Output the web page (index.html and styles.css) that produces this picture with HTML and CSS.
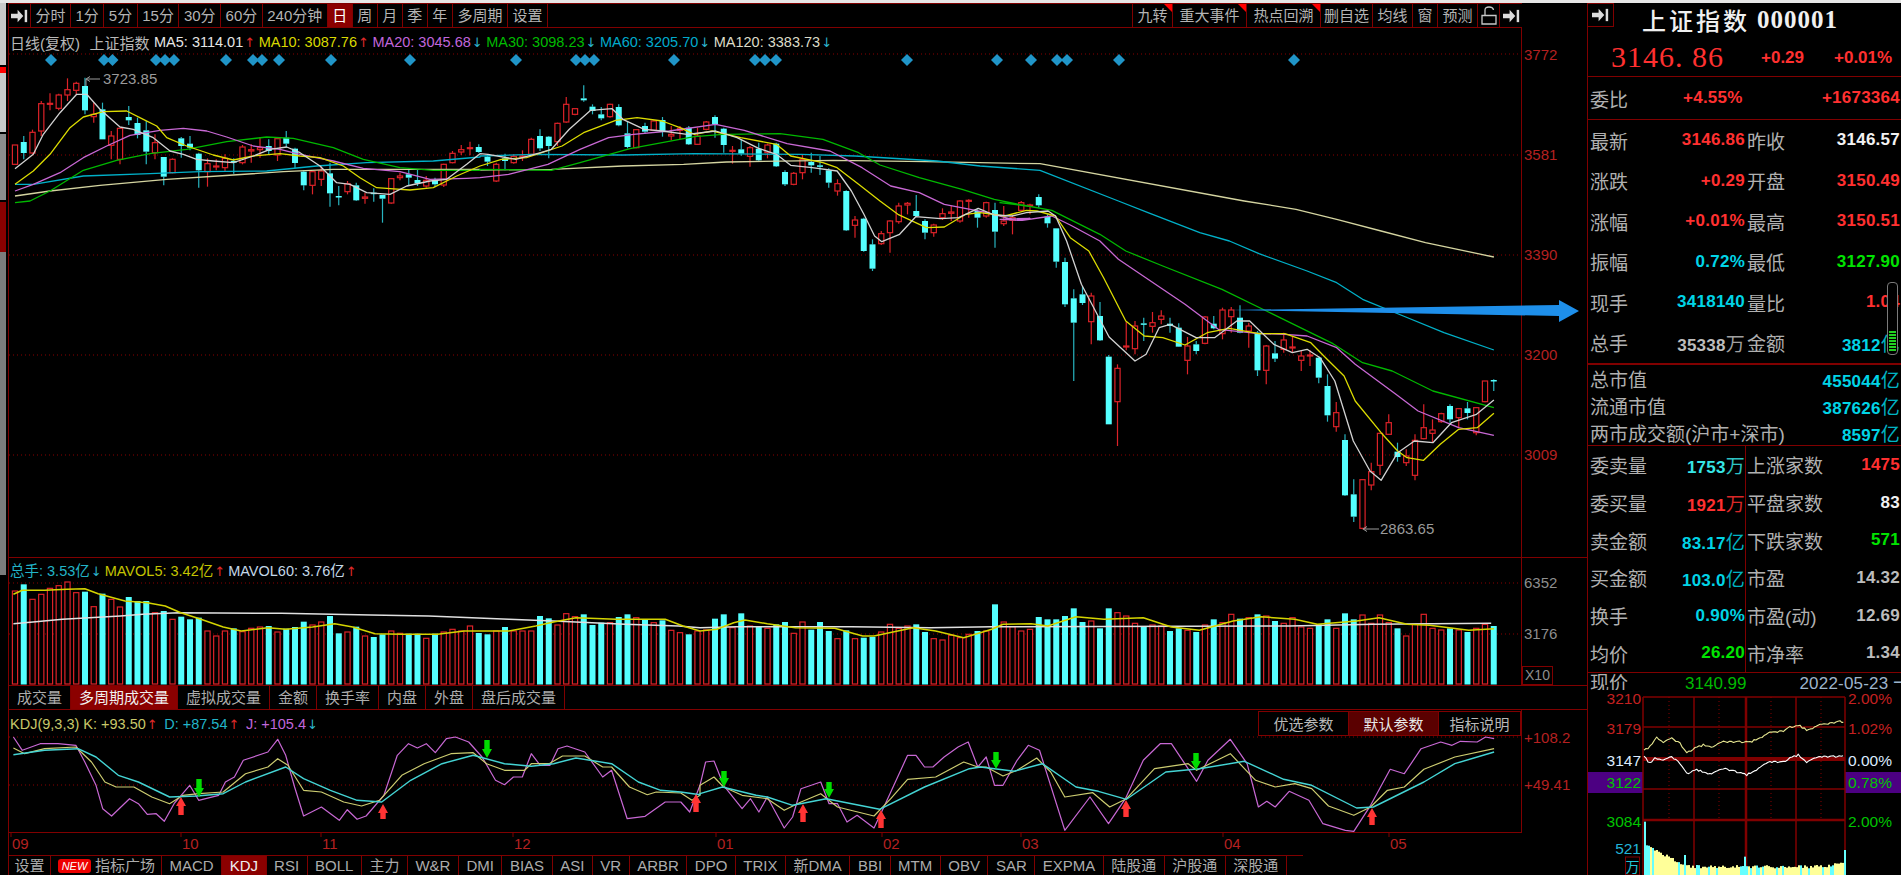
FILE: index.html
```html
<!DOCTYPE html>
<html lang="zh-CN">
<head>
<meta charset="utf-8">
<title>上证指数 000001</title>
<link rel="stylesheet" href="styles.css">
</head>
<body>
<div class="app">
  <div class="topstrip"></div>
  <div class="work">
    <div class="rail">
      <div class="rail-a"></div>
      <div class="rail-b"></div>
      <div class="rail-c"></div>
      <div class="rail-d"></div>
      <div class="rail-e"></div>
    </div>
    <main class="main">
      <div class="toolbar">
        <div class="tools">
          <button class="tool tool-icon"><svg class="arrow-ico" viewBox="0 0 18 14"><path d="M0 4.500H7V0.500L13 7L7 13.500V9.500H0Z"/><rect x="14.500" y="0.500" width="2.600" height="13"/></svg></button>
          <button class="tool">分时</button><button class="tool">1分</button><button class="tool">5分</button><button class="tool">15分</button><button class="tool">30分</button><button class="tool">60分</button><button class="tool">240分钟</button><button class="tool on">日</button><button class="tool">周</button><button class="tool">月</button><button class="tool">季</button><button class="tool">年</button><button class="tool">多周期</button><button class="tool">设置</button>
        </div>
        <div class="tools tools-right">
          <button class="tool flag">九转</button><button class="tool flag wide">重大事件</button><button class="tool flag wide">热点回溯</button><button class="tool slim">删自选</button><button class="tool">均线</button><button class="tool">窗</button><button class="tool">预测</button>
          <button class="tool tool-icon"><svg class="lock-ico" viewBox="0 0 16 19"><path d="M1 9.500H15V18H1Z M4 9.500V4Q4 1 8 1Q12 1 12.500 4"/></svg></button>
          <button class="tool tool-icon"><svg class="arrow-ico" viewBox="0 0 18 14"><path d="M0 4.500H7V0.500L13 7L7 13.500V9.500H0Z"/><rect x="14.500" y="0.500" width="2.600" height="13"/></svg></button>
        </div>
      </div>

      <section class="pane pane-price">
        <div class="plot">
          <div class="legend legend-price">
            <span class="c-dim">日线(复权)</span>
            <span class="c-dim gap-name">上证指数</span>
            <span class="c-ma5 gap-a">MA5: 3114.01<b class="up">↑</b></span>
            <span class="c-ma10">MA10: 3087.76<b class="up">↑</b></span>
            <span class="c-ma20">MA20: 3045.68<b class="down">↓</b></span>
            <span class="c-ma30">MA30: 3098.23<b class="down">↓</b></span>
            <span class="c-ma60">MA60: 3205.70<b class="down">↓</b></span>
            <span class="c-ma120">MA120: 3383.73<b class="down">↓</b></span>
          </div>
          <svg id="price" class="chart chart-price" viewBox="9 53 1512 503">
            <g class="plots"></g>
            <path class="pin" d="M100 78H87M90 75.500L86 78L90 80.500M86 78V85"/>
            <text class="extreme" x="103" y="83">3723.85</text>
            <path class="pin" d="M1379 528H1364M1367 525.500L1363 528L1367 530.500"/>
            <text class="extreme" x="1380" y="533">2863.65</text>
          </svg>
        </div>
        <div class="axis axis-price">
          <span class="tick">3772</span><span class="tick">3581</span><span class="tick">3390</span><span class="tick">3200</span><span class="tick">3009</span>
        </div>
        <svg class="blue-arrow" viewBox="1230 300 350 26"><path d="M1230 312L1559 307V302L1579 313L1559 324V318Z"/></svg>
      </section>

      <section class="pane pane-vol">
        <div class="plot">
          <div class="legend legend-vol">
            <span class="c-vol">总手: 3.53亿<b class="down">↓</b></span>
            <span class="c-mv5">MAVOL5: 3.42亿<b class="up">↑</b></span>
            <span class="c-mv60">MAVOL60: 3.76亿<b class="up">↑</b></span>
          </div>
          <svg id="vol" class="chart chart-vol" viewBox="9 579 1512 105"><g class="plots"></g></svg>
        </div>
        <div class="axis axis-vol">
          <span class="tick tick-grey">6352</span><span class="tick tick-grey tick-mid">3176</span>
          <span class="x10">X10</span>
        </div>
      </section>

      <nav class="tabs tabs-mid">
        <button class="tab">成交量</button><button class="tab on">多周期成交量</button><button class="tab">虚拟成交量</button><button class="tab">金额</button><button class="tab">换手率</button><button class="tab">内盘</button><button class="tab">外盘</button><button class="tab">盘后成交量</button>
      </nav>

      <section class="pane pane-kdj">
        <div class="plot">
          <div class="legend legend-kdj">
            <span class="c-k">KDJ(9,3,3) K: +93.50<b class="up">↑</b></span>
            <span class="c-d">D: +87.54<b class="up">↑</b></span>
            <span class="c-j">J: +105.4<b class="down">↓</b></span>
          </div>
          <svg id="kdj" class="chart chart-kdj" viewBox="9 732 1512 98"><g class="plots"></g></svg>
          <div class="params">
            <button class="param">优选参数</button><button class="param on">默认参数</button><button class="param">指标说明</button>
          </div>
        </div>
        <div class="axis axis-kdj">
          <span class="tick tick-wide">+108.2</span><span class="tick tick-wide">+49.41</span>
        </div>
      </section>

      <svg id="months" class="months" viewBox="9 831 1512 22">
        <g class="plots"></g>
        <text x="12" y="847">09</text><text x="182" y="847">10</text><text x="322" y="847">11</text><text x="514" y="847">12</text><text x="717" y="847">01</text><text x="883" y="847">02</text><text x="1022" y="847">03</text><text x="1224" y="847">04</text><text x="1390" y="847">05</text>
      </svg>

      <nav class="tabs tabs-bottom">
        <button class="tab tab-set">设置</button>
        <button class="tab tab-new"><span class="new">NEW</span>指标广场</button>
        <button class="tab">MACD</button><button class="tab on">KDJ</button><button class="tab">RSI</button><button class="tab">BOLL</button><button class="tab">主力</button><button class="tab">W&amp;R</button><button class="tab">DMI</button><button class="tab">BIAS</button><button class="tab">ASI</button><button class="tab">VR</button><button class="tab">ARBR</button><button class="tab">DPO</button><button class="tab">TRIX</button><button class="tab">新DMA</button><button class="tab">BBI</button><button class="tab">MTM</button><button class="tab">OBV</button><button class="tab">SAR</button><button class="tab">EXPMA</button><button class="tab">陆股通</button><button class="tab">沪股通</button><button class="tab">深股通</button>
      </nav>
    </main>

    <aside class="side">
      <div class="side-head">
        <button class="side-btn"><svg class="arrow-ico" viewBox="0 0 18 14"><path d="M0 4.500H7V0.500L13 7L7 13.500V9.500H0Z"/><rect x="14.500" y="0.500" width="2.600" height="13"/></svg></button>
        <h1 class="title"><span class="name">上证指数</span><span class="code">000001</span></h1>
      </div>
      <div class="side-price">
        <span class="last">3146. 86</span><span class="chg">+0.29</span><span class="chg chg-pct">+0.01%</span>
      </div>
      <div class="webi">
        <span class="k">委比</span><span class="v red webi-a">+4.55%</span><span class="v red">+1673364</span>
      </div>

      <div class="quote">
        <div class="kv"><span class="k">最新</span><span class="v red">3146.86</span></div>
        <div class="kv"><span class="k">昨收</span><span class="v white">3146.57</span></div>
        <div class="kv"><span class="k">涨跌</span><span class="v red">+0.29</span></div>
        <div class="kv"><span class="k">开盘</span><span class="v red">3150.49</span></div>
        <div class="kv"><span class="k">涨幅</span><span class="v red">+0.01%</span></div>
        <div class="kv"><span class="k">最高</span><span class="v red">3150.51</span></div>
        <div class="kv"><span class="k">振幅</span><span class="v cyan">0.72%</span></div>
        <div class="kv"><span class="k">最低</span><span class="v green">3127.90</span></div>
        <div class="kv"><span class="k">现手</span><span class="v cyan">3418140</span></div>
        <div class="kv"><span class="k">量比</span><span class="v red">1.04</span></div>
        <div class="kv"><span class="k">总手</span><span class="v grey">35338<i>万</i></span></div>
        <div class="kv"><span class="k">金额</span><span class="v cyan">3812<i>亿</i></span></div>
      </div>
      <div class="gauge"></div>

      <div class="caps">
        <div class="kv"><span class="k">总市值</span><span class="v cyan">455044<i>亿</i></span></div>
        <div class="kv"><span class="k">流通市值</span><span class="v cyan">387626<i>亿</i></span></div>
        <div class="kv"><span class="k">两市成交额(沪市+深市)</span><span class="v cyan">8597<i>亿</i></span></div>
      </div>

      <div class="breadth">
        <div class="kv"><span class="k">委卖量</span><span class="v aqua">1753<i>万</i></span></div>
        <div class="kv"><span class="k">上涨家数</span><span class="v red">1475</span></div>
        <div class="kv"><span class="k">委买量</span><span class="v red">1921<i>万</i></span></div>
        <div class="kv"><span class="k">平盘家数</span><span class="v white">83</span></div>
        <div class="kv"><span class="k">卖金额</span><span class="v cyan">83.17<i>亿</i></span></div>
        <div class="kv"><span class="k">下跌家数</span><span class="v green">571</span></div>
        <div class="kv"><span class="k">买金额</span><span class="v cyan">103.0<i>亿</i></span></div>
        <div class="kv"><span class="k">市盈</span><span class="v grey">14.32</span></div>
        <div class="kv"><span class="k">换手</span><span class="v cyan">0.90%</span></div>
        <div class="kv"><span class="k">市盈(动)</span><span class="v grey">12.69</span></div>
        <div class="kv"><span class="k">均价</span><span class="v green">26.20</span></div>
        <div class="kv"><span class="k">市净率</span><span class="v grey">1.34</span></div>
      </div>

      <div class="now">
        <span class="k">现价</span><span class="now-price">3140.99</span><span class="now-date">2022-05-23 一</span>
      </div>
      <svg id="mini" class="mini" viewBox="1588 690 313 185">
        <rect class="band" x="1588" y="772" width="55" height="21"/><rect class="band" x="1845" y="772" width="56" height="21"/>
        <g class="plots"></g>
        <g class="mini-left">
          <text class="m-red" x="1641" y="704">3210</text><text class="m-red" x="1641" y="734">3179</text><text class="m-white" x="1641" y="766">3147</text><text class="m-green" x="1641" y="788">3122</text><text class="m-green" x="1641" y="827">3084</text><text class="m-blue" x="1641" y="854">521</text>
        </g>
        <g class="mini-right">
          <text class="m-red" x="1848" y="704">2.00%</text><text class="m-red" x="1848" y="734">1.02%</text><text class="m-white" x="1848" y="766">0.00%</text><text class="m-green" x="1848" y="788">0.78%</text><text class="m-green" x="1848" y="827">2.00%</text>
        </g>
        <rect class="wan-box" x="1625.500" y="857" width="14" height="18"/>
        <text class="wan" x="1632.500" y="872">万</text>
      </svg>
    </aside>
  </div>
</div>
<script src="charts.js"></script>
</body>
</html>
```
FILE: styles.css
```css
* { box-sizing: border-box; }
html, body { margin: 0; height: 100%; background: #000; overflow: hidden; }
body { font-family: "Liberation Sans", "Noto Sans CJK SC", sans-serif; color: #b4b4b4; }
button { font: inherit; color: inherit; background: none; border: 0; margin: 0; padding: 0; }

.app { width: 1901px; height: 875px; display: flex; flex-direction: column; }
.topstrip { height: 3px; background: #e6e6e6; flex: none; }
.work { flex: 1; display: flex; min-height: 0; }

/* left rail */
.rail { width: 8px; flex: none; display: flex; flex-direction: column; padding-right: 2px; }
.rail-a { height: 62px; background: #c9c9c9; margin-bottom: 2px; }
.rail-b { height: 65px; background: linear-gradient(#f00 0 6px, #c8c8c8 6px); margin-bottom: 2px; }
.rail-c { height: 66px; background: #8d8d8d; margin-bottom: 2px; }
.rail-d { height: 50px; background: #8b0000; }
.rail-e { height: 323px; background: #7c7c7c; }

.main { width: 1579px; flex: none; display: flex; flex-direction: column; border-left: 1px solid #800000; position: relative; }

/* toolbar */
.toolbar { width: 1513px; height: 25px; flex: none; display: flex; justify-content: space-between; border-top: 1px solid #800000; border-bottom: 1px solid #800000; font-size: 15px; }
.tools { display: flex; }
.tool { padding: 0 4.500px; height: 23px; line-height: 23px; border-right: 1px solid #800000; white-space: nowrap; position: relative; }
.tools-right { border-left: 1px solid #800000; }
.tools-right .tool:last-child { border-right: 0; }
.tool.wide { padding: 0 6.500px; }
.tool.slim { padding: 0 3px; }
.tool.on { background: #8b0000; color: #fff; }
.tool.flag::after { content: ""; position: absolute; top: 0; right: 0; border-style: solid; border-width: 0 8px 8px 0; border-color: transparent #f00 transparent transparent; }
.tool-icon { width: 22px; padding: 0; display: flex; align-items: center; justify-content: center; }
.arrow-ico { width: 17px; height: 14px; fill: #dcdcdc; }
.lock-ico { width: 16px; height: 19px; fill: none; stroke: #c8c8c8; stroke-width: 1.300; }

/* panes */
.pane { display: flex; position: relative; flex: none; }
.pane-price { height: 530px; border-bottom: 1px solid #800000; }
.pane-vol { height: 128px; border-bottom: 1px solid #800000; }
.pane-kdj { height: 123px; }
.plot { width: 1512px; flex: none; display: flex; flex-direction: column; position: relative; }
.pane-kdj .plot { border-bottom: 1px solid #800000; }
.axis { flex: 1; border-left: 1px solid #800000; display: flex; flex-direction: column; padding-left: 2px; font-size: 15px; color: #b52020; }
.tick { height: 20px; line-height: 20px; flex: none; }
.axis-price { padding-top: 17px; gap: 80px; }
.axis-vol { padding-top: 15px; }
.tick-grey { color: #8e8e8e; }
.tick-mid { margin-top: 31px; }
.axis-kdj { padding-top: 18px; gap: 27px; }
.x10 { margin: auto 0 0 -2px; width: 31px; height: 19px; line-height: 17px; border: 1px solid #800000; color: #8e8e8e; font-size: 14px; text-align: center; }

.chart { display: block; flex: none; width: 1512px; overflow: visible; }
.chart-price { height: 503px; }
.chart-vol { height: 105px; }
.chart-kdj { height: 98px; }

/* legends */
.legend { display: flex; align-items: center; white-space: nowrap; font-size: 14.500px; padding-left: 1px; flex: none; }
.legend b { font-weight: 400; margin-left: 1px; font-family: "DejaVu Sans", sans-serif; font-size: 13px; }
.legend .up { color: #e02a2a; }
.legend .down { color: #2cb4cc; }
.legend-price { height: 26px; gap: 3.500px; padding-top: 2px; }
.gap-name { margin-left: 6px; }
.gap-a { margin-left: 1px; }
.legend-vol { height: 22px; gap: 3px; padding-top: 1px; }
.legend-kdj { height: 24px; gap: 6.500px; padding-top: 4px; }
.c-dim { color: #b8b8b8; font-size: 15px; }
.c-ma5 { color: #e6e6e6; }
.c-ma10 { color: #d9d900; }
.c-ma20 { color: #c066dc; }
.c-ma30 { color: #00bb00; }
.c-ma60 { color: #00aacc; }
.c-ma120 { color: #dcdcc8; }
.c-vol { color: #22b4c8; }
.c-mv5 { color: #c4c400; }
.c-mv60 { color: #c4d8e8; }
.c-k { color: #c8c86a; }
.c-d { color: #22b4c8; }
.c-j { color: #c066dc; }

.pin { fill: none; stroke: #9c9c9c; stroke-width: 1; }
.extreme { fill: #9a9a9a; font-size: 15px; }
.blue-arrow { position: absolute; left: 1221px; top: 270px; width: 350px; height: 26px; fill: #1e8fea; z-index: 2; }

/* tabs */
.tabs { display: flex; flex: none; font-size: 15px; }
.tabs-mid { height: 24px; border-bottom: 1px solid #800000; }
.tabs-bottom { flex: 1; min-height: 0; border-top: 1px solid #800000; width: 1294px; overflow: hidden; }
.tab { padding: 0 8px; border-right: 1px solid #800000; white-space: nowrap; color: #acacac; height: 100%; line-height: 23px; }
.tab.on { background: #8b0000; color: #f0f0f0; }
.tab-set { padding: 0 5.500px; margin-right: 2px; }
.tab-new { padding: 0 6px 0 5px; display: flex; align-items: center; gap: 4px; }
.new { width: 33px; height: 14px; line-height: 14px; border-radius: 3px; background: #ee0000; color: #fff; font-size: 11px; font-style: italic; text-align: center; }
.tabs-bottom .tab { padding: 0 7.500px; line-height: 19px; }
.tabs-bottom .tab-set { padding: 0 5.500px; }
.tabs-bottom .tab-new { padding: 0 6px 0 5px; }

.params { position: absolute; top: 1px; right: 0; height: 25px; display: flex; border: 1px solid #800000; background: #000; font-size: 15px; }
.param { width: 90px; border-right: 1px solid #800000; color: #b8b8b8; }
.param:last-child { width: 81px; border-right: 0; }
.param.on { background: #5a0000; color: #e8e8e8; }

.months { display: block; flex: none; width: 1512px; height: 22px; }
.months text { fill: #b52020; font-size: 15px; }

/* right panel */
.side { width: 314px; flex: none; display: flex; flex-direction: column; border-left: 1px solid #800000; position: relative; overflow: hidden; }
.side-head { height: 34px; display: flex; align-items: flex-start; flex: none; }
.side-btn { width: 26px; height: 24px; border: 1px solid #800000; border-left: 0; display: flex; align-items: center; justify-content: center; flex: none; }
.title { margin: 2px 0 0 28px; color: #f0f0f0; font: 500 24px/30px "Noto Sans CJK SC", sans-serif; white-space: nowrap; display: flex; gap: 7px; }
.name { letter-spacing: 3px; }
.code { font: 700 25px/30px "Liberation Serif", serif; letter-spacing: 1px; }
.side-price { height: 40px; flex: none; display: flex; align-items: center; padding-left: 23px; border-bottom: 1px solid #800000; color: #ff3030; }
.last { font: 400 30px/1 "Liberation Serif", serif; letter-spacing: 1px; width: 150px; white-space: pre; }
.chg { font-weight: 700; font-size: 17px; width: 73px; padding-top: 3px; }
.chg-pct { width: auto; }

.k { font-size: 19px; color: #b0b0b0; white-space: nowrap; }
.v { font-weight: 700; font-size: 17px; white-space: nowrap; letter-spacing: .25px; }
.v i { font-style: normal; font-weight: 400; font-size: 19px; opacity: .85; }
.red { color: #ff3030; }
.white { color: #f2f2f2; }
.cyan { color: #00d4e6; }
.aqua { color: #36e6e6; }
.green { color: #00e400; }
.grey { color: #bcbcbc; }

.webi { height: 43px; flex: none; display: flex; align-items: center; padding: 0 1px 0 2px; border-bottom: 1px solid #800000; }
.webi-a { margin-left: 55px; margin-right: auto; }

.kv { display: flex; justify-content: space-between; align-items: center; padding: 0 1px 0 2px; min-width: 0; }
.quote { flex: none; height: 245px; display: grid; grid-template-columns: 158px 155px; grid-auto-rows: 40.500px; border-bottom: 2px solid #800000; padding-top: 0; }
.quote .kv:nth-child(even), .breadth .kv:nth-child(even) { padding-left: 1px; }
.caps { flex: none; height: 81px; display: grid; grid-auto-rows: 27px; border-bottom: 1px solid #800000; }
.breadth { flex: none; height: 227px; display: grid; grid-template-columns: 158px 155px; grid-auto-rows: 37.700px; border-bottom: 1px solid #800000; position: relative; }
.breadth::after { content: ""; position: absolute; top: 0; bottom: 0; left: 157px; width: 1px; background: #800000; }

.gauge { position: absolute; left: 299px; top: 279px; width: 11px; height: 73px; border: 1px solid #7a7a7a; border-radius: 4px; background: repeating-linear-gradient(#22d022 0 2px, #000 2px 3px) 1px 48px / 7px 21px no-repeat, #000; }

.now { height: 17px; flex: none; overflow: hidden; display: flex; align-items: flex-start; padding-left: 2px; font-size: 17px; line-height: 21px; }
.now .k { line-height: 21px; }
.now-price { color: #00b800; margin-left: 57px; }
.now-date { color: #9db4cc; margin-left: 53px; letter-spacing: .2px; white-space: nowrap; }

.mini { display: block; flex: none; width: 313px; height: 185px; background: #000; }
.band { fill: #4c0082; }
.mini text { font-size: 15.500px; }
.mini-left text { text-anchor: end; }
.m-red { fill: #c42020; }
.m-white { fill: #dcecff; }
.m-green { fill: #00c400; }
.m-blue { fill: #22b4d8; }
.wan-box { fill: #000; stroke: #800000; }
.mini .wan { fill: #22c8d8; font-size: 14px; text-anchor: middle; font-family: "Noto Sans CJK SC", sans-serif; }
```
FILE: charts.js
```js
(function () {
  var NS = 'http://www.w3.org/2000/svg';
  function el(parent, tag, attrs) {
    var n = document.createElementNS(NS, tag);
    for (var k in attrs) n.setAttribute(k, attrs[k]);
    parent.appendChild(n);
    return n;
  }
  function layer(id) { return document.querySelector('#' + id + ' .plots'); }
  function z9(p) { return [p[0] / 3, 50 + p[1] / 3]; }
  function z11(p) { return [480 + p[0] / 2.8, 70 + p[1] / 3]; }
  function z10(p) { return [1000 + p[0] / 2.703, 200 + p[1] / 3]; }
  function z6(p) { return [p[0] / 2.24, 550 + p[1] / 3]; }
  function z12(p) { return [700 + p[0] / 1.782, 570 + p[1] / 3]; }
  function z7(p) { return [p[0] / 2.24, 730 + p[1] / 3]; }
  function z8(p) { return [700 + p[0] / 1.782, 690 + p[1] / 3]; }
  function pairs(flat, f) {
    var out = [];
    for (var i = 0; i < flat.length; i += 2) out.push(f([flat[i], flat[i + 1]]));
    return out;
  }
  function line(g, pts, color, w) {
    el(g, 'polyline', {
      points: pts.map(function (p) { return p[0].toFixed(1) + ',' + p[1].toFixed(1); }).join(' '),
      fill: 'none', stroke: color, 'stroke-width': w || 1.3, 'stroke-linejoin': 'round'
    });
  }
  function dotted(g, y, x1, x2) {
    el(g, 'line', { x1: x1, x2: x2, y1: y, y2: y, stroke: '#8a0000', 'stroke-width': 1, 'stroke-dasharray': '1 3' });
  }

  /* candles: top, bottom, high, low, isCyan */
  var A = [[282,340,282,340,0],[273,306,255,325,1],[244,306,236,310,0],[158,240,150,255,0],[157,160,127,178,0],[132,172,128,178,0],[116,132,82,150,0],[97,118,92,130,0],[105,178,80,190,1],[190,197,155,215,0],[175,265,155,265,1],[255,283,240,325,0],[232,325,232,340,0],[198,208,165,222,1],[216,252,200,262,1],[238,302,210,340,1],[275,305,250,325,0],[318,377,318,403,1],[325,365,322,367,0],[262,285,258,320,1],[278,290,255,298,1],[308,358,305,410,1],[338,362,322,407,0],[345,347,325,358,0],[322,350,310,360,0],[330,335,322,368,1],[288,335,282,340,0],[296,300,280,335,0],[290,296,258,320,0],[285,300,265,310,1],[263,312,262,330,0],[260,278,240,290,1],[293,336,290,352,1],[362,403,358,418,1],[362,403,360,430,0],[360,385,345,405,0],[367,427,335,467,1],[435,437,405,463,1],[398,422,390,430,0],[403,448,395,450,1],[438,442,425,458,0],[425,427,412,452,1],[432,443,432,515,1],[383,456,382,458,0],[375,380,365,388,0],[370,380,352,405,1],[387,397,357,405,1],[388,405,375,410,0],[387,400,380,408,1],[340,402,338,408,0],[307,335,300,337,0],[296,303,282,312,0],[290,292,272,313,0],[288,303,280,305,1],[317,332,310,345,1],[340,390,335,393,0]];
  var B = [[262,270,248,298,1],[256,275,250,278,0],[255,258,238,270,0],[205,250,200,252,0],[195,232,175,240,1],[197,225,195,262,1],[157,212,155,225,0],[100,153,78,155,0],[113,130,112,133,0],[82,88,43,92,1],[107,120,100,130,1],[130,142,108,148,1],[100,137,98,140,0],[108,163,100,166,1],[187,228,150,232,1],[176,230,175,232,0],[165,182,155,188,1],[150,178,148,180,0],[147,183,138,197,1],[190,195,165,208,0],[172,178,165,205,0],[170,220,165,222,1],[195,220,170,222,0],[153,175,150,178,0],[138,160,133,200,1],[173,222,170,245,1],[238,241,225,278,0],[235,248,205,254,1],[230,256,225,287,0],[233,268,215,272,1],[222,245,218,262,0],[218,286,215,288,1],[303,340,298,345,1],[307,340,303,343,0],[265,305,250,325,0],[273,283,245,305,1],[283,286,255,312,1],[298,335,292,350,1],[338,360,325,374,0],[360,478,358,480,1],[447,463,435,500,0],[443,540,440,542,1],[520,593,505,600,1],[488,518,480,522,0],[450,485,448,545,0],[405,452,395,458,0],[397,402,393,430,0],[420,435,372,437,1],[450,485,445,505,1],[462,485,458,497,0],[428,440,412,447,0],[423,427,405,450,0],[390,450,388,455,0],[388,391,385,440,0],[420,440,415,470,1],[395,435,392,440,0],[417,482,395,530,1],[450,458,405,465,0],[440,448,432,490,0],[395,418,390,422,0],[402,405,398,430,0],[378,403,370,410,1]];
  var C = [[47,67,40,80,1],[82,182,82,200,1],[183,310,170,318,1],[292,365,265,540,1],[280,306,255,312,1],[285,362,275,430,0],[345,418,303,420,1],[467,670,462,670,1],[502,602,490,735,0],[435,438,362,448,0],[375,443,360,460,0],[367,370,350,420,1],[365,376,333,395,0],[345,355,328,370,0],[368,375,350,395,1],[380,437,367,438,1],[435,478,408,520,0],[430,450,420,460,1],[348,427,345,430,0],[368,382,345,385,1],[327,398,320,415,0],[327,347,318,395,0],[350,395,313,397,1],[375,390,365,440,0],[395,508,390,525,1],[435,508,432,550,0],[457,473,420,483,1],[417,445,395,455,0],[438,441,405,455,0],[465,478,450,510,0],[462,465,448,495,0],[470,530,465,547,1],[555,643,520,662,1],[635,677,603,692,0],[717,883,700,885,1],[880,947,835,963,1],[836,982,835,985,0],[812,852,785,868,0],[697,793,695,822,0],[665,700,640,702,0],[752,768,725,782,1],[765,785,745,795,0],[718,823,700,838,0],[680,713,610,715,0],[687,697,655,725,0],[638,662,635,665,0],[615,655,610,665,1],[623,650,622,680,0],[622,636,603,655,1],[620,695,618,703,0],[540,602,540,604,0],[537,538,535,570,1]];
  var candles = [];
  [[A, 50], [B, 70], [C, 200]].forEach(function (s) {
    s[0].forEach(function (c) {
      candles.push([s[1] + c[0] / 3, s[1] + c[1] / 3, s[1] + c[2] / 3, s[1] + c[3] / 3, c[4]]);
    });
  });
  function cx(i) { return 15 + 8.75 * i; }

  var RED = '#dc2228', CYAN = '#54ffff', WICK = '#27b4c0';

  /* price pane */
  var g = layer('price');
  [53, 154, 254, 354, 454].forEach(function (y) { dotted(g, y, 9, 1521); });
  [51,104,112.5,156,165,174,226,253,262,279,331,410,516,576,585,594,674,755,765,776,907,997,1031,1057,1067,1119,1294].forEach(function (x) {
    el(g, 'polygon', { points: [x - 6, 59, x, 53, x + 6, 59, x, 65].join(' '), fill: '#2095c8' });
  });
  candles.forEach(function (c, i) {
    var x = cx(i), col = c[4] ? WICK : RED;
    el(g, 'line', { x1: x, x2: x, y1: c[2], y2: c[0], stroke: col, 'stroke-width': 1.2 });
    el(g, 'line', { x1: x, x2: x, y1: c[1], y2: c[3], stroke: col, 'stroke-width': 1.2 });
    if (c[4]) el(g, 'rect', { x: x - 3, y: c[0], width: 6, height: Math.max(c[1] - c[0], 1.5), fill: CYAN });
    else el(g, 'rect', { x: x - 2.6, y: c[0], width: 5.2, height: Math.max(c[1] - c[0], 1), fill: '#000', stroke: RED, 'stroke-width': 1.2 });
  });
  var ma120 = pairs([45,435,150,420,300,403,500,385,700,372,850,362,1000,355,1440,355], z9)
    .concat(pairs([0,297,200,295,400,285,570,280,690,273,990,268,1250,272,1568,278], z11))
    .concat(pairs([660,0,800,25,910,55,1030,90,1150,125,1335,168], z10));
  var ma60 = pairs([45,400,100,400,250,375,450,368,600,362,800,360,950,345,1100,335,1300,330,1440,318], z9)
    .concat(pairs([0,255,150,250,400,252,600,248,900,250,1050,255,1280,270,1400,285,1568,298], z11))
    .concat(pairs([320,0,400,35,540,95,620,120,700,158,830,210,910,245,980,295,1090,345,1200,395,1335,447], z10));
  var ma30 = pairs([45,455,90,450,150,420,250,358,350,328,450,308,560,295,680,272,800,258,880,262,1000,290,1090,325,1200,350,1300,358,1440,358], z9)
    .concat(pairs([0,295,200,298,280,275,420,233,600,197,680,190,840,188,960,205,1060,245,1120,282,1230,320,1350,355,1440,385,1530,405], z11))
    .concat(pairs([0,5,60,12,140,28,270,100,340,150,440,195,600,265,720,330,900,428,980,485,1060,510,1170,570,1335,620], z10));
  var ma20 = pairs([45,420,100,400,180,365,250,320,320,285,390,253,480,238,550,232,620,240,680,258,760,285,840,295,900,310,1000,330,1090,352,1200,362,1290,385,1400,382], z9)
    .concat(pairs([0,320,80,310,190,280,280,235,360,200,430,190,530,180,660,160,740,178,860,218,980,240,1070,290,1150,345,1230,365,1300,400,1420,425,1500,448,1540,442], z11))
    .concat(pairs([0,55,60,58,140,45,190,72,270,120,320,175,440,265,500,310,590,385,700,398,770,400,830,405,910,440,960,490,1070,580,1130,630,1240,680,1335,703], z10));
  var ma10 = pairs([45,400,100,360,150,310,210,230,250,198,310,182,380,180,430,205,470,225,500,260,560,285,640,312,700,327,760,315,840,308,900,315,960,320,1030,345,1080,380,1130,410,1170,413,1230,417,1300,410,1370,375,1440,345], z9)
    .concat(pairs([60,265,130,260,230,225,290,185,380,148,440,140,510,150,560,170,600,190,650,180,730,200,830,220,870,255,960,275,1000,290,1060,340,1120,390,1170,430,1250,470,1300,468,1360,430,1400,425,1470,435,1530,418], z11))
    .concat(pairs([100,30,150,45,190,110,240,150,280,230,340,360,390,405,440,410,500,432,560,395,620,382,700,398,770,398,840,425,880,470,930,525,960,600,1030,695,1075,750,1100,770,1145,778,1190,730,1240,685,1290,680,1335,637], z10));
  var ma5 = pairs([45,353,100,310,130,250,180,185,230,130,260,130,300,175,360,228,400,235,460,260,510,300,550,310,590,325,640,330,700,335,760,315,810,295,860,288,900,305,960,345,1010,395,1050,400,1100,425,1170,430,1220,405,1290,390,1340,385,1400,340,1440,308], z9)
    .concat(pairs([22,250,100,265,170,245,200,235,250,175,310,118,370,113,400,145,460,175,510,180,580,190,660,180,720,200,780,232,830,250,870,283,930,290,1000,300,1040,360,1075,430,1105,495,1125,512,1175,490,1220,437,1290,443,1340,440,1395,412,1440,432,1490,435,1530,425], z11))
    .concat(pairs([130,30,150,45,180,120,220,250,295,408,365,480,395,460,430,380,460,370,530,410,580,410,640,360,675,360,740,430,790,455,830,445,865,470,905,540,955,720,1000,810,1030,838,1075,755,1120,720,1170,725,1220,665,1288,640,1335,597], z10));
  line(g, ma120, '#d4d4a0'); line(g, ma60, '#00b0c8'); line(g, ma30, '#00b800');
  line(g, ma20, '#c868d4'); line(g, ma10, '#dcdc00'); line(g, ma5, '#d2d2d2');

  /* volume pane */
  var g2 = layer('vol');
  dotted(g2, 582, 9, 1521); dotted(g2, 633, 9, 1521);
  var V1 = [120,100,145,130,112,104,93,125,122,167,128,145,168,138,150,150,185,180,205,197,205,200,240,255,240,232,242,232,228,225,243,233,228,212,222,213,195,247,243,227,255,258,250,240,247,248,248,262,248,243,235,240,225,246,250,240,228,240,240,240,195,202,222,188,197,190,222,215,215,198,190,200,205,215,208,238,245,250];
  var V2 = [180,177,143,130,170,127,165,165,172,160,153,187,153,176,153,180,203,178,203,200,198,183,160,172,165,160,183,203,207,193,200,190,180,180,100,153,167,180,175,138,145,145,135,112,153,150,172,112,125,135,157,165,162,165,180,172,178,183,162,145,155,130,143,140,130,135,150,157,140,168,172,160,145,172,127,145,132,157,132,155,172,195,160,130,172,177,172,177,183,172,160,165];
  var tops = V1.map(function (v) { return 550 + v / 3; }).concat(V2.map(function (v) { return 570 + v / 3; }));
  tops.forEach(function (y, i) {
    var x = cx(i);
    if (candles[i][4]) el(g2, 'rect', { x: x - 3, y: y, width: 6, height: 683.5 - y, fill: CYAN });
    else el(g2, 'rect', { x: x - 2.6, y: y, width: 5.2, height: 683 - y, fill: '#000', stroke: RED, 'stroke-width': 1.2 });
  });
  var mv60 = pairs([30,218,80,212,140,205,200,200,270,195,320,190,400,185,630,187,830,192,960,195,1140,205,1240,210,1400,220,1520,225], z6)
    .concat(pairs([0,170,65,167,270,167,410,170,520,167,1050,165,1200,160,1410,157], z12));
  var mv5 = pairs([30,130,50,118,100,118,150,115,190,113,220,128,280,150,330,155,370,165,405,185,450,205,500,228,540,240,600,230,640,235,700,228,750,218,790,228,840,248,900,250,980,250,1040,240,1140,240,1200,225,1240,213,1290,200,1380,205,1490,205,1530,225], z6)
    .concat(pairs([0,180,30,175,60,155,80,147,120,158,170,170,240,172,290,195,310,195,380,170,420,180,470,200,520,175,540,160,590,158,620,165,670,137,720,145,790,140,840,168,890,178,950,150,1000,137,1060,145,1100,160,1170,150,1210,140,1260,160,1300,163,1370,178,1415,173], z12));
  line(g2, mv60, '#e0e0e0', 1.5); line(g2, mv5, '#d4d400', 1.5);

  /* KDJ pane */
  var g3 = layer('kdj');
  dotted(g3, 735, 9, 1521); dotted(g3, 783, 9, 1521);
  var J = pairs([30,15,50,55,90,35,130,35,170,40,190,90,215,160,230,230,250,252,290,200,310,215,330,247,350,245,368,268,390,215,425,160,445,205,490,190,505,150,525,135,545,85,600,60,622,22,640,70,660,165,680,252,720,225,760,265,778,233,800,262,820,252,860,190,890,70,915,35,935,48,955,35,975,62,1000,20,1020,15,1050,30,1080,75,1110,145,1130,158,1150,135,1170,135,1190,65,1210,100,1232,100,1250,50,1270,42,1310,60,1350,135,1370,115,1405,260,1445,253,1490,210,1525,210,1545,240,1568,160], z7)
    .concat(pairs([10,210,25,207,42,280,75,350,90,320,105,360,120,315,150,408,165,375,180,290,215,270,230,335,245,335,262,390,280,370,310,408,325,355,370,190,385,190,400,225,415,225,435,195,460,165,478,150,495,225,510,195,525,280,540,280,565,205,585,160,605,175,650,415,695,315,728,395,758,320,790,205,820,155,840,155,885,268,905,205,945,142,975,215,995,345,1010,328,1025,345,1050,298,1085,325,1110,395,1150,415,1165,418,1195,340,1230,232,1255,245,1285,170,1320,150,1340,160,1355,148,1385,150,1400,135,1415,140], z8));
  var K = pairs([30,48,55,65,100,50,170,45,205,90,235,150,260,165,300,165,340,195,380,215,410,190,445,185,500,180,550,125,600,105,622,80,645,100,680,175,720,180,770,210,810,222,850,205,900,130,950,95,1010,65,1060,62,1090,95,1130,115,1175,115,1190,95,1230,95,1260,72,1310,72,1350,105,1370,105,1410,165,1450,188,1470,180,1525,183,1550,205,1568,190], z7)
    .concat(pairs([0,280,25,255,42,285,75,310,120,320,150,355,180,330,215,305,245,345,310,372,340,320,370,262,420,255,470,210,495,225,510,225,540,252,565,235,600,198,625,240,650,315,700,302,730,345,760,320,810,230,870,215,885,235,945,185,990,265,1025,285,1060,275,1090,290,1120,342,1165,370,1195,345,1225,295,1255,285,1290,232,1345,195,1415,170], z8));
  var D = pairs([30,68,100,55,175,50,215,75,265,130,310,150,380,195,440,192,500,185,550,150,640,105,680,140,740,175,800,205,855,210,920,145,990,95,1060,70,1130,95,1190,103,1240,95,1290,78,1370,95,1430,150,1480,175,1525,180,1568,188], z7)
    .concat(pairs([0,305,40,285,100,310,120,315,165,340,225,320,320,352,400,285,480,230,500,225,560,238,610,215,670,285,710,298,760,322,830,240,890,230,970,208,1040,262,1090,280,1170,348,1200,345,1290,270,1345,215,1415,180], z8));
  line(g3, J, '#c868d4', 1.2); line(g3, K, '#cccc70', 1.2); line(g3, D, '#44d4d4', 1.4);
  function kArrow(x, tip, tail, up) {
    var d = up ? 9 : -9;
    var pts = [[x, tip], [x + 5, tip + d], [x + 2.7, tip + d], [x + 2.7, tail], [x - 2.7, tail], [x - 2.7, tip + d], [x - 5, tip + d]];
    el(g3, 'polygon', { points: pts.map(function (p) { return p.join(','); }).join(' '), fill: up ? '#ff3434' : '#00dc00' });
  }
  [[181,795,813],[383,802,817],[696,792,810],[803,802,820],[881,808,826],[1126,798,815],[1372,806,823]].forEach(function (a) { kArrow(a[0], a[1], a[2], true); });
  [[199,795,777],[487,756,738],[724,785,769],[829,796,780],[996,767,750],[1196,768,751]].forEach(function (a) { kArrow(a[0], a[1], a[2], false); });

  /* month ticks */
  var g4 = layer('months');
  [11,181,321,513,716,882,1021,1223,1389].forEach(function (x) {
    el(g4, 'line', { x1: x, x2: x, y1: 831, y2: 835, stroke: '#800000' });
  });

  /* intraday mini chart */
  var m = layer('mini');
  function hl(y, w) { el(m, 'line', { x1: 1643, x2: 1845, y1: y, y2: y, stroke: '#800000', 'stroke-width': w }); }
  hl(697, 1.5); hl(727, 1.5); hl(759, 4); hl(789, 1.5); hl(820, 2.5);
  [[1643,1.5],[1694,1.5],[1746,2.5],[1796,1.5],[1845,1.5]].forEach(function (v) {
    el(m, 'line', { x1: v[0], x2: v[0], y1: 697, y2: 875, stroke: '#800000', 'stroke-width': v[1] });
  });
  [1669,1719,1771,1821].forEach(function (x) {
    el(m, 'line', { x1: x, x2: x, y1: 697, y2: 820, stroke: '#8a0000', 'stroke-dasharray': '1 3' });
  });
  function z5(p) { return [1580 + p[0] / 3, 600 + p[1] / 3]; }
  function jitter(pts) {
    var out = [], seed = 7;
    for (var s = 0; s < pts.length - 1; s++) {
      var a = pts[s], b = pts[s + 1], n = Math.max(1, Math.round((b[0] - a[0]) / 2));
      for (var i = 0; i < n; i++) {
        seed = (seed * 31 + 11) % 101;
        out.push([a[0] + (b[0] - a[0]) * i / n, a[1] + (b[1] - a[1]) * i / n + (seed / 101 - .5) * 2]);
      }
    }
    return out;
  }
  line(m, jitter(pairs([192,452,210,440,230,410,250,428,275,415,300,430,320,460,345,445,370,435,400,440,430,425,510,427,570,398,610,393,630,382,660,378,680,390,720,375,780,365,795,368], z5)), '#e6e690', 1.1);
  line(m, jitter(pairs([192,470,210,490,225,472,250,482,275,470,300,490,320,522,350,510,395,522,430,505,500,525,570,485,610,487,630,475,655,465,680,485,720,470,795,470], z5)), '#fff', 1.1);
  var seedV = 3;
  for (var i = 0; i < 101; i++) {
    seedV = (seedV * 37 + 5) % 97;
    var x = 1644 + i * 2;
    var Y = 730 + 65 * Math.min(1, i / 22) + (seedV / 97) * 10;
    if (i === 0) Y = 665;
    if (i === 20) Y = 765;
    if (i === 50) Y = 770;
    if (i > 88) Y -= (i - 88) * 0.8;
    if (i === 100) Y = 750;
    var top = 600 + Y / 3;
    var cyan = (i < 3) || i === 20 || i === 50 || i === 100 || (seedV % 5 === 0);
    el(m, 'rect', { x: x, y: top, width: 2, height: 875 - top, fill: cyan ? '#66ffff' : '#ffff99' });
  }
})();
```
